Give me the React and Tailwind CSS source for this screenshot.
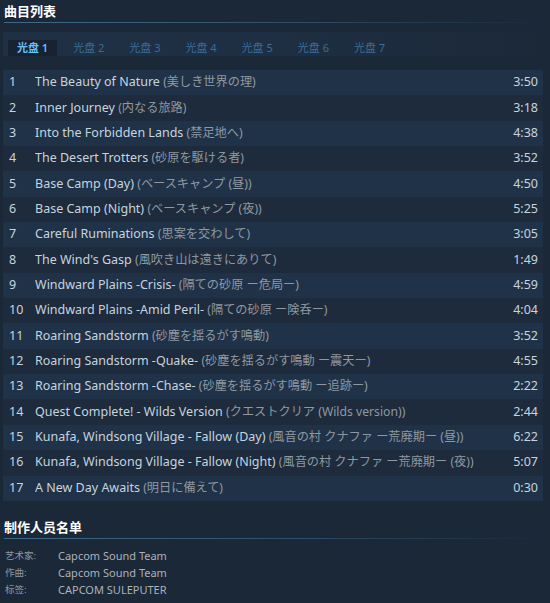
import { useState } from 'react';

const tracks = [
  ['The Beauty of Nature', '(美しき世界の理)', '3:50'],
  ['Inner Journey', '(内なる旅路)', '3:18'],
  ['Into the Forbidden Lands', '(禁足地へ)', '4:38'],
  ['The Desert Trotters', '(砂原を駆ける者)', '3:52'],
  ['Base Camp (Day)', '(ベースキャンプ (昼))', '4:50'],
  ['Base Camp (Night)', '(ベースキャンプ (夜))', '5:25'],
  ['Careful Ruminations', '(思案を交わして)', '3:05'],
  ["The Wind's Gasp", '(風吹き山は遠きにありて)', '1:49'],
  ['Windward Plains -Crisis-', '(隔ての砂原 ー危局ー)', '4:59'],
  ['Windward Plains -Amid Peril-', '(隔ての砂原 ー険呑ー)', '4:04'],
  ['Roaring Sandstorm', '(砂塵を揺るがす鳴動)', '3:52'],
  ['Roaring Sandstorm -Quake-', '(砂塵を揺るがす鳴動 ー震天ー)', '4:55'],
  ['Roaring Sandstorm -Chase-', '(砂塵を揺るがす鳴動 ー追跡ー)', '2:22'],
  ['Quest Complete! - Wilds Version', '(クエストクリア (Wilds version))', '2:44'],
  ['Kunafa, Windsong Village - Fallow (Day)', '(風音の村 クナファ ー荒廃期ー (昼))', '6:22'],
  ['Kunafa, Windsong Village - Fallow (Night)', '(風音の村 クナファ ー荒廃期ー (夜))', '5:07'],
  ['A New Day Awaits', '(明日に備えて)', '0:30'],
];

const discs = ['光盘 1', '光盘 2', '光盘 3', '光盘 4', '光盘 5', '光盘 6', '光盘 7'];

const credits = [
  ['艺术家:', 'Capcom Sound Team'],
  ['作曲:', 'Capcom Sound Team'],
  ['标签:', 'CAPCOM SULEPUTER'],
];

export default function App() {
  const [disc, setDisc] = useState(0);

  return (
    <div className="w-[550px] h-[603px] overflow-hidden bg-[#1b2838] font-['Noto_Sans','Noto_Sans_CJK_SC',sans-serif] text-[#c6d4df]">
      {/* Track list header */}
      <div className="px-[4px] pt-[1px]">
        <h2 className="text-[13px] leading-[20px] font-bold text-white">曲目列表</h2>
        <div className="h-px mt-[1px] bg-gradient-to-r from-[#3d6a89] via-[#2f516d] to-transparent" />
      </div>

      {/* Disc tabs */}
      <div className="mx-[3px] mt-[9px] h-[24px] flex items-end gap-[7px] pl-[5px] bg-gradient-to-r from-[#1f3044] via-[#1e2f43] to-[#1b2838]">
        {discs.map((d, i) => (
          <button
            key={d}
            onClick={() => setDisc(i)}
            className={`h-[16px] px-[9px] text-[11px] leading-[16px] ${
              i === disc ? 'bg-[#172232] text-[#67c1f5] font-semibold' : 'text-[#3a6d94]'
            }`}
          >
            {d}
          </button>
        ))}
      </div>

      {/* Tracks */}
      <div className="mx-[3px] mt-[14px] w-[540px]">
        {tracks.map(([en, jp, time], i) => (
          <div
            key={i}
            className={`h-[25.35px] flex items-center pl-[6px] pr-[5px] text-[12.5px] ${
              i % 2 === 0 ? 'bg-[#203248]' : 'bg-[#1d2b3c]'
            }`}
          >
            <span className="w-[26px] shrink-0 text-[#c6d4df]">{i + 1}</span>
            <span className="flex-1 truncate">
              <span className="text-[#c6d4df]">{en}</span>{' '}
              <span className="text-[12.2px] text-[#8f98a0]">{jp}</span>
            </span>
            <span className="text-[#c6d4df]">{time}</span>
          </div>
        ))}
      </div>

      {/* Credits */}
      <div className="px-[4px] mt-[16px]">
        <h2 className="text-[13px] leading-[20px] font-bold text-white">制作人员名单</h2>
        <div className="h-px mt-[1px] bg-gradient-to-r from-[#3d6a89] via-[#2f516d] to-transparent" />
        <div className="mt-[9px] flex flex-col">
          {credits.map(([k, v]) => (
            <div key={k} className="h-[17px] flex items-center">
              <span className="w-[54px] pl-[1px] text-[9.5px] text-[#8f98a0]">{k}</span>
              <span className="text-[11px] text-[#acb2b8]">{v}</span>
            </div>
          ))}
        </div>
      </div>
    </div>
  );
}
